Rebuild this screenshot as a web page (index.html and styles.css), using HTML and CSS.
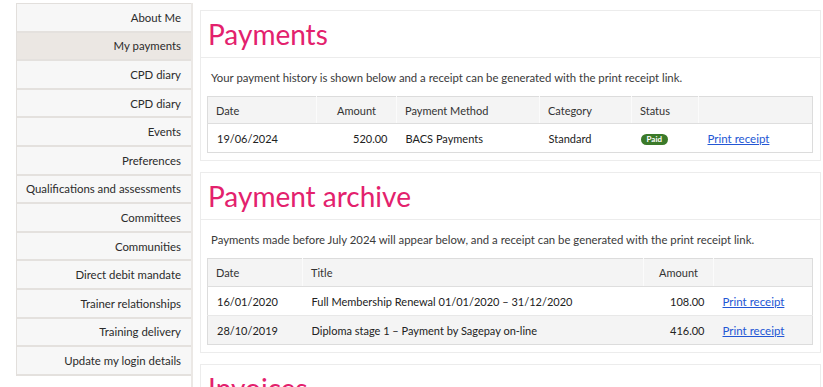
FILE: index.html
```html
<!DOCTYPE html>
<html lang="en">
<head>
<meta charset="utf-8">
<title>My payments</title>
<link rel="stylesheet" href="styles.css">
</head>
<body>
<div class="layout">
  <nav class="sidebar">
    <ul class="menu">
      <li class="menu-item">About Me</li>
      <li class="menu-item active">My payments</li>
      <li class="menu-item">CPD diary</li>
      <li class="menu-item">CPD diary</li>
      <li class="menu-item">Events</li>
      <li class="menu-item">Preferences</li>
      <li class="menu-item">Qualifications and assessments</li>
      <li class="menu-item">Committees</li>
      <li class="menu-item">Communities</li>
      <li class="menu-item">Direct debit mandate</li>
      <li class="menu-item">Trainer relationships</li>
      <li class="menu-item">Training delivery</li>
      <li class="menu-item">Update my login details</li>
    </ul>
  </nav>
  <main class="main">
    <section class="card">
      <div class="card-head"><h1 class="card-title">Payments</h1></div>
      <div class="card-body">
        <p class="intro">Your payment history is shown below and a receipt can be generated with the print receipt link.</p>
        <table class="grid grid-payments">
          <colgroup>
            <col class="c-date1"><col class="c-amt1"><col class="c-method"><col class="c-cat"><col class="c-status"><col>
          </colgroup>
          <thead>
            <tr><th>Date</th><th class="center">Amount</th><th>Payment Method</th><th>Category</th><th>Status</th><th></th></tr>
          </thead>
          <tbody>
            <tr><td>19/06/2024</td><td class="num">520.00</td><td>BACS Payments</td><td>Standard</td><td><span class="badge">Paid</span></td><td><a class="link" href="#">Print receipt</a></td></tr>
          </tbody>
        </table>
      </div>
    </section>
    <section class="card">
      <div class="card-head"><h1 class="card-title">Payment archive</h1></div>
      <div class="card-body">
        <p class="intro">Payments made before July 2024 will appear below, and a receipt can be generated with the print receipt link.</p>
        <table class="grid grid-archive">
          <colgroup>
            <col class="c-date2"><col class="c-title"><col class="c-amt2"><col>
          </colgroup>
          <thead>
            <tr><th>Date</th><th>Title</th><th class="center">Amount</th><th></th></tr>
          </thead>
          <tbody>
            <tr><td>16/01/2020</td><td>Full Membership Renewal 01/01/2020 – 31/12/2020</td><td class="num">108.00</td><td><a class="link" href="#">Print receipt</a></td></tr>
            <tr class="alt"><td>28/10/2019</td><td>Diploma stage 1 – Payment by Sagepay on-line</td><td class="num">416.00</td><td><a class="link" href="#">Print receipt</a></td></tr>
          </tbody>
        </table>
      </div>
    </section>
    <section class="card">
      <div class="card-head"><h1 class="card-title">Invoices</h1></div>
    </section>
  </main>
</div>
</body>
</html>
```
FILE: styles.css
```css
* { box-sizing: border-box; }
html, body { margin: 0; padding: 0; background: #fff; }
body {
  font-family: Lato, "Open Sans", Arial, sans-serif;
  font-size: 11px;
  color: #333;
  height: 387px;
  overflow: hidden;
}
.layout {
  display: flex;
  align-items: stretch;
  padding-top: 3px;
  min-height: 400px;
}
.sidebar {
  margin-left: 16px;
  width: 177px;
  flex: none;
  border-right: 2px solid #ebe8e5;
}
.menu {
  list-style: none;
  margin: 0;
  padding: 0;
  border-left: 1px solid #e2dfdc;
  border-top: 1px solid #e2dfdc;
}
.menu-item {
  height: 28.6px;
  display: flex;
  align-items: center;
  justify-content: flex-end;
  padding-right: 10px;
  background: #f7f7f7;
  border-bottom: 2px solid #e4e1de;
  color: #2b2b2b;
  font-size: 11.4px;
  white-space: nowrap;
}
.menu-item.active { background: #ebe7e3; }
.main {
  margin-left: 7px;
  width: 621px;
  flex: none;
  display: flex;
  flex-direction: column;
  gap: 11px;
  padding-top: 7px;
}
.card {
  border: 1px solid #ececec;
  background: #fff;
}
.card-head {
  border-bottom: 1px solid #ececec;
  padding: 7px 7px 6px;
}
.card-title {
  margin: 0;
  font-size: 28px;
  line-height: 33px;
  font-weight: 400;
  color: #e3216d;
}
.card-body {
  padding: 12px 7px 7px 6px;
}
.intro {
  margin: 0 0 11px 4px;
  line-height: 15px;
  font-size: 11.35px;
  color: #3a3a3a;
  white-space: nowrap;
}
.grid {
  width: 100%;
  border-collapse: collapse;
  border: 1px solid #dcdcdc;
  table-layout: fixed;
  font-size: 11px;
  color: #222;
}
.grid th {
  background: #f4f4f4;
  font-weight: 400;
  text-align: left;
  height: 27px;
  padding: 0 8px;
  border-bottom: 1px solid #dedede;
  border-left: 1px solid #fbfbfb;
  color: #333;
}
.grid th:first-child { border-left: 0; }
.grid td {
  height: 29px;
  padding: 0 8px 0 9px;
  border-bottom: 1px solid #e8e8e8;
}
.grid tr:last-child td { border-bottom: 0; }
.grid .center { text-align: center; }
.grid .num { text-align: right; padding-right: 9px; }
.grid .alt td { background: #f4f4f4; }
.grid-archive th { height: 28px; }
.c-date1 { width: 109px; }
.c-amt1 { width: 80px; }
.c-method { width: 143px; }
.c-cat { width: 92px; }
.c-status { width: 67px; }
.c-date2 { width: 95px; }
.c-title { width: 341px; }
.c-amt2 { width: 70px; }
.badge {
  display: inline-block;
  background: #3b7a29;
  color: #fff;
  font-weight: 700;
  font-size: 8px;
  line-height: 9px;
  padding: 1px 6px;
  border-radius: 6px;
  vertical-align: middle;
}
.link {
  color: #2356d4;
  text-decoration: underline;
  font-size: 11.5px;
}
```
